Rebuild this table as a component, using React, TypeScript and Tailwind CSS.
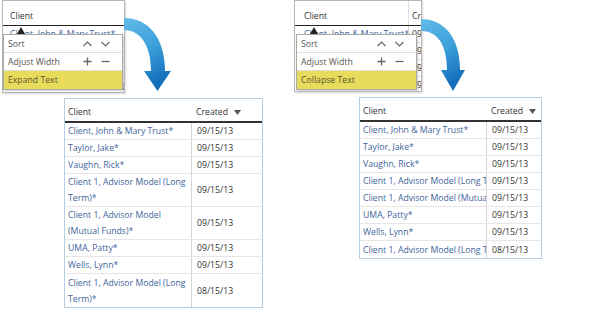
import type { ReactNode } from 'react'

type Row = { name: string[]; date: string }

const rows: Row[] = [
  { name: ['Client, John & Mary Trust*'], date: '09/15/13' },
  { name: ['Taylor, Jake*'], date: '09/15/13' },
  { name: ['Vaughn, Rick*'], date: '09/15/13' },
  { name: ['Client 1, Advisor Model (Long', 'Term)*'], date: '09/15/13' },
  { name: ['Client 1, Advisor Model', '(Mutual Funds)*'], date: '09/15/13' },
  { name: ['UMA, Patty*'], date: '09/15/13' },
  { name: ['Wells, Lynn*'], date: '09/15/13' },
  { name: ['Client 1, Advisor Model (Long', 'Term)*'], date: '08/15/13' },
]

function SortDown() {
  return (
    <svg width="7" height="5" viewBox="0 0 7 5" className="ml-[6px] mt-[1px]">
      <path d="M0 0 H7 L3.5 5 Z" fill="#555" />
    </svg>
  )
}

function Chevron({ up }: { up?: boolean }) {
  return (
    <svg width="9" height="6" viewBox="0 0 9 6">
      <path d={up ? 'M0.5 5 L4.5 1 L8.5 5' : 'M0.5 1 L4.5 5 L8.5 1'} fill="none" stroke="#666" strokeWidth="1.1" />
    </svg>
  )
}

function Plus() {
  return (
    <svg width="9" height="9" viewBox="0 0 9 9">
      <path d="M4.5 0.5 V8.5 M0.5 4.5 H8.5" stroke="#666" strokeWidth="1.3" />
    </svg>
  )
}

function Minus() {
  return (
    <svg width="9" height="9" viewBox="0 0 9 9">
      <path d="M0.5 4.5 H8.5" stroke="#666" strokeWidth="1.3" />
    </svg>
  )
}

function MenuRow({ label, a, b, active }: { label: string; a?: ReactNode; b?: ReactNode; active?: boolean }) {
  return (
    <div className={`h-[18px] flex items-center pl-[4px] pr-[8px] ${active ? 'bg-[#e8dc5c] text-[#5a5530]' : 'border-b border-[#dedede] text-[#555]'}`}>
      <span className="flex-1">{label}</span>
      <span className="w-[18px] flex justify-center">{a}</span>
      <span className="w-[18px] flex justify-center">{b}</span>
    </div>
  )
}

function Menu({ label, className }: { label: string; className: string }) {
  return (
    <div className={`absolute top-[33px] bg-white border border-[#a8a8a8] shadow-[1px_1px_2px_rgba(0,0,0,0.2)] ${className}`}>
      <MenuRow label="Sort" a={<Chevron up />} b={<Chevron />} />
      <MenuRow label="Adjust Width" a={<Plus />} b={<Minus />} />
      <MenuRow label={label} active />
    </div>
  )
}

function Caret({ className }: { className: string }) {
  return <div className={`absolute top-[26px] w-0 h-0 border-x-[4px] border-x-transparent border-b-[7px] border-b-[#222] ${className}`} />
}

function LeftSnippet() {
  return (
    <div className="relative w-[123px] h-[93px] border border-[#b5b5b5] bg-white overflow-hidden shadow-[1px_1px_2px_rgba(0,0,0,0.15)]">
      <div className="h-[25px] flex items-end pb-[3px] pl-[7px] text-[#333] border-b-[1.5px] border-[#222]">Client</div>
      {rows.slice(0, 4).map((r, i) => (
        <div key={i} className="h-[17px] flex items-center pl-[7px] text-[#40659a] border-b border-[#e6e6e6] whitespace-nowrap">
          {r.name.join(' ')}
        </div>
      ))}
      <Caret className="left-[14px]" />
      <Menu label="Expand Text" className="left-0 w-[120px]" />
    </div>
  )
}

function RightSnippet() {
  return (
    <div className="relative w-[128px] h-[92px] border border-[#b5b5b5] bg-white overflow-hidden shadow-[1px_1px_2px_rgba(0,0,0,0.15)]">
      <div className="h-[25px] flex text-[#333] border-b-[1.5px] border-[#222] whitespace-nowrap">
        <div className="w-[113px] shrink-0 flex items-end pb-[3px] pl-[9px]">Client</div>
        <div className="flex items-end pb-[3px] pl-[3px] border-l border-[#e0e0e0]">Created</div>
      </div>
      {rows.slice(0, 4).map((r, i) => (
        <div key={i} className="h-[17px] flex border-b border-[#e6e6e6] whitespace-nowrap">
          <div className="w-[113px] shrink-0 overflow-hidden flex items-center pl-[9px] text-[#40659a]">{r.name.join(' ')}</div>
          <div className="flex items-center pl-[3px] text-[#333] border-l border-[#d6d6d6]">{r.date}</div>
        </div>
      ))}
      <Caret className="left-[15px]" />
      <Menu label="Collapse Text" className="left-[1px] w-[121px]" />
    </div>
  )
}

function BigTable({ expand, className }: { expand?: boolean; className: string }) {
  return (
    <div className={`border border-[#b9cde0] bg-white ${className}`}>
      <div className="h-[24px] flex items-end pb-[3px] text-[#333] border-b-2 border-[#333]">
        <div className="w-[126px] shrink-0 pl-[3px]">Client</div>
        <div className="flex items-center pl-[5px]">
          Created
          <SortDown />
        </div>
      </div>
      {rows.map((r, i) => {
        const tall = expand && r.name.length > 1
        return (
          <div key={i} className={`flex border-[#e6e6e6] ${i < rows.length - 1 ? 'border-b' : ''} ${tall ? 'h-[33px]' : 'h-[17px]'}`}>
            <div className={`w-[126px] shrink-0 flex items-center pl-[3px] text-[#40659a] overflow-hidden whitespace-nowrap ${tall ? 'leading-[16px]' : ''}`}>
              {expand ? (
                <div>
                  {r.name.map((n, j) => (
                    <div key={j}>{n}</div>
                  ))}
                </div>
              ) : (
                r.name.join(' ')
              )}
            </div>
            <div className="flex-1 flex items-center pl-[5px] text-[#333] border-l border-[#d4d4d4]">{r.date}</div>
          </div>
        )
      })}
    </div>
  )
}

export default function App() {
  return (
    <div className="relative w-[590px] h-[312px] bg-white flex text-[8.7px] leading-[12px] font-['Open_Sans',sans-serif]">
      <div className="w-[292px] shrink-0 pl-[2px]">
        <LeftSnippet />
        <BigTable expand className="ml-[62px] mt-[5px] w-[199px]" />
      </div>
      <div className="w-[298px] shrink-0 pl-[2px]">
        <RightSnippet />
        <BigTable className="ml-[65px] mt-[5px] w-[183px]" />
      </div>

      {/* arrows */}
      <svg className="absolute inset-0 pointer-events-none" width="590" height="312" viewBox="0 0 590 312">
        <defs>
          <linearGradient id="arrowBlue" x1="0" y1="0" x2="0.35" y2="1">
            <stop offset="0" stopColor="#62bbe8" />
            <stop offset="0.55" stopColor="#3a9fd9" />
            <stop offset="1" stopColor="#1570bb" />
          </linearGradient>
        </defs>
        <path d="M124 18 C147 18 165 36 165 71 L171 71 L157.5 91 L144 71 L151 71 C151 45 140 30 124 30 Z" fill="url(#arrowBlue)" />
        <path d="M421 19 C443 19 460 36 460 70 L465 70 L453 91 L441 70 L447 70 C447 44 437 31 421 31 Z" fill="url(#arrowBlue)" />
      </svg>
    </div>
  )
}
